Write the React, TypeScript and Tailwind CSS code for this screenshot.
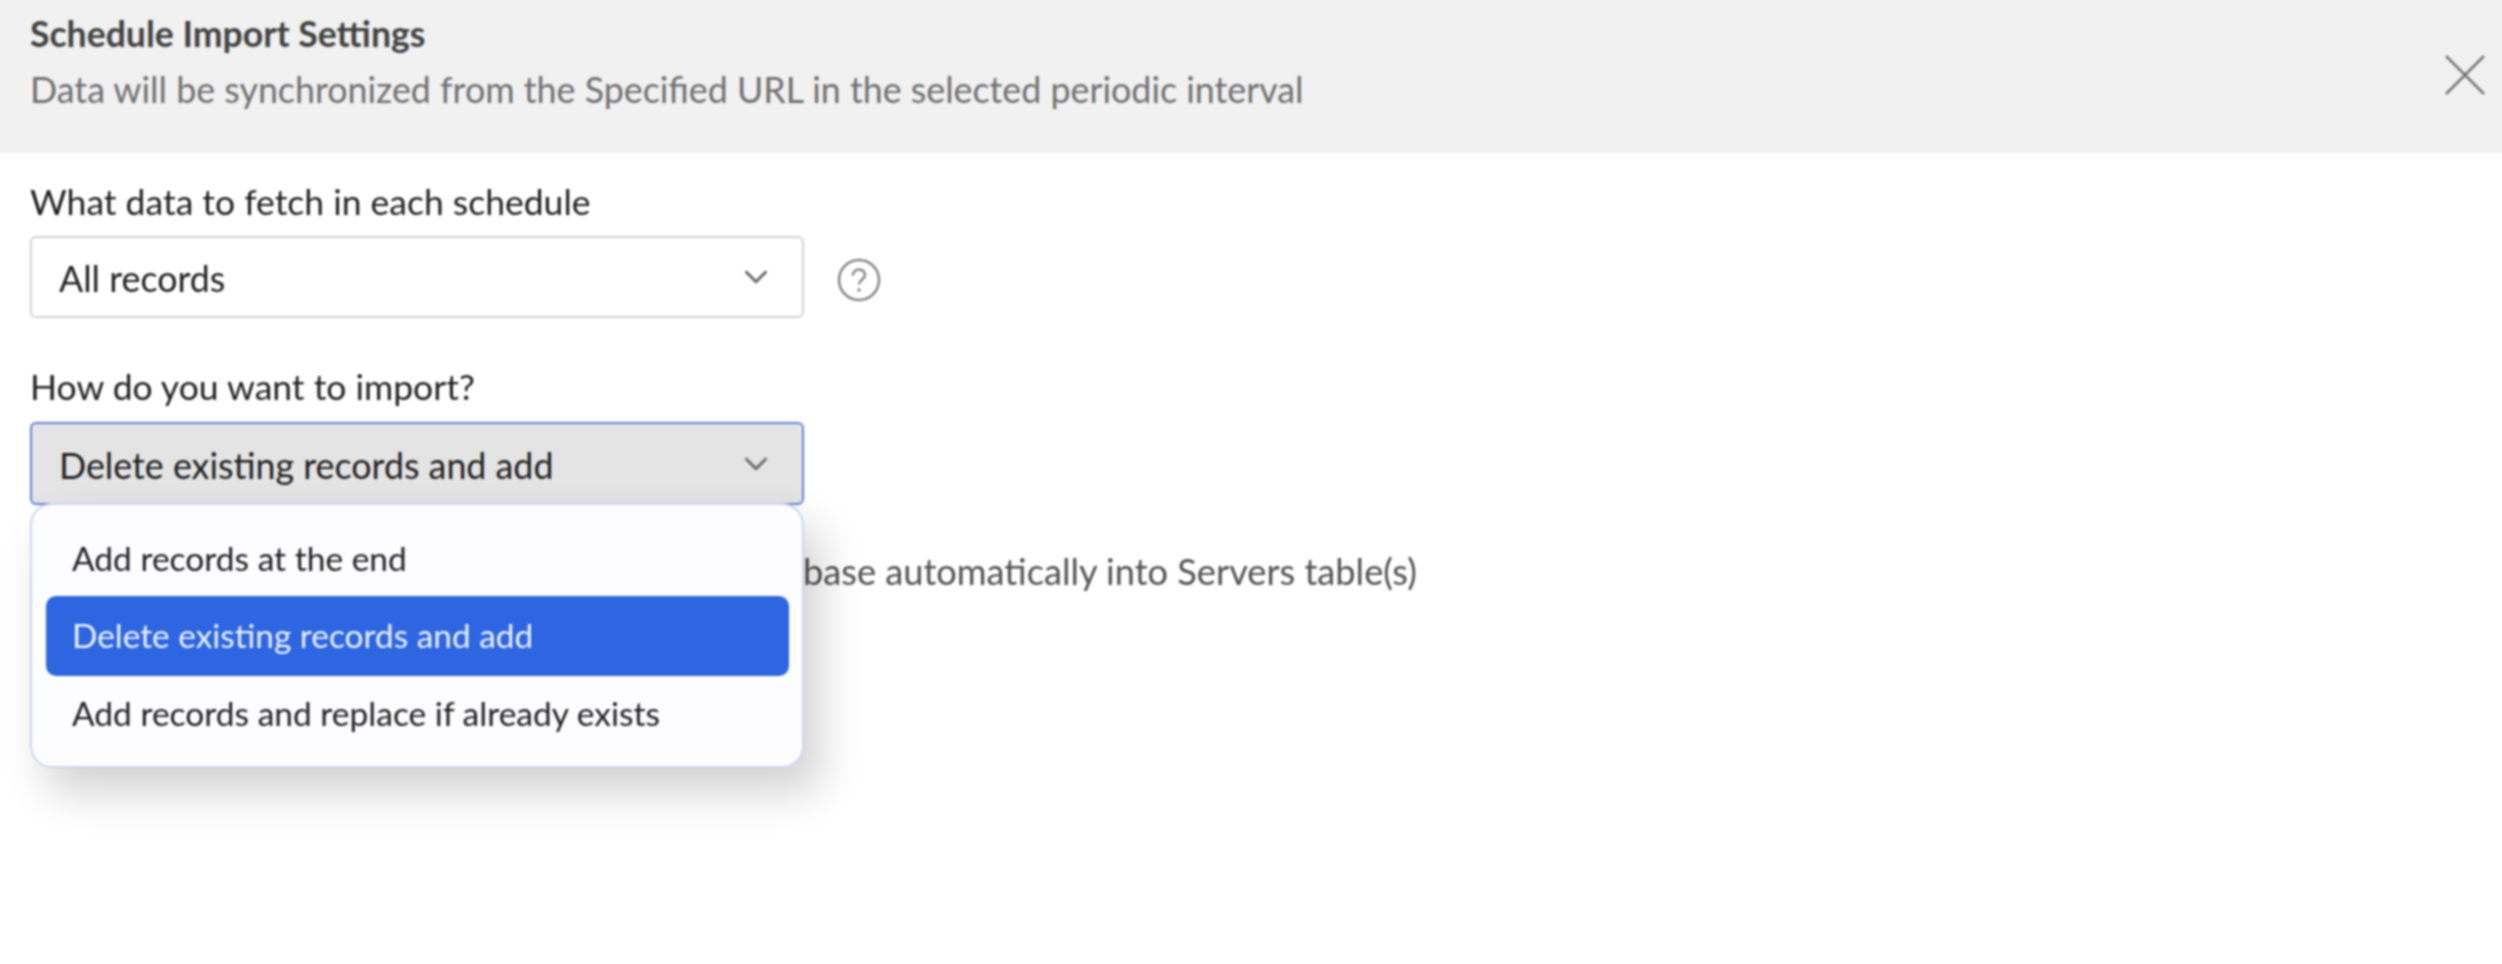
import { ChevronDown } from 'lucide-react';

const options = ['Add records at the end', 'Delete existing records and add', 'Add records and replace if already exists'];

function Select({ value, open }: { value: string; open?: boolean }) {
  return (
    <div
      className={
        open
          ? 'flex h-[83px] w-[774px] items-center justify-between rounded-[6px] border-2 border-[#5f82de] bg-[#e4e4e4] pl-[27px] pr-[27px]'
          : 'flex h-[82px] w-[774px] items-center justify-between rounded-[6px] border-2 border-[#d2d2d2] bg-white pl-[27px] pr-[27px]'
      }
    >
      <span className="pt-[4px] text-[35.8px] leading-none text-[#1f1f1f]">{value}</span>
      <ChevronDown className="size-[38px] text-[#6e6e6e]" strokeWidth={2} />
    </div>
  );
}

export default function App() {
  return (
    <div className="h-[964px] w-[2502px] overflow-hidden bg-white">
      <div className="font-['Lato',sans-serif] blur-[0.8px]">
        <header className="-mx-[6px] -mt-[6px] flex h-[159px] items-start justify-between bg-[#f1f1f1] pl-[36px] pr-[23px] pt-[17px]">
          <div>
            <h1 className="text-[35.6px] font-bold leading-[46px] text-[#424242]">Schedule Import Settings</h1>
            <p className="mt-[10px] text-[35.8px] leading-[46px] text-[#707070]">
              Data will be synchronized from the Specified URL in the selected periodic interval
            </p>
          </div>
          <svg viewBox="0 0 40 40" className="mt-[44px] size-[40px] text-[#777777]" fill="none" stroke="currentColor" strokeWidth="2.5">
            <path d="M1 1L39 39M39 1L1 39" />
          </svg>
        </header>

        <div className="px-[30px] pt-[27px]">
          <label className="block text-[35.5px] leading-[44px] text-[#1f1f1f]">What data to fetch in each schedule</label>
          <div className="mt-[12px] flex items-center gap-[33px]">
            <Select value="All records" />
            <svg viewBox="0 0 44 44" className="mt-[5px] size-[44px] text-[#858585]" fill="none" stroke="currentColor">
              <circle cx="22" cy="22" r="20" strokeWidth="2.5" />
              <path d="M16 17.5c0-3.5 2.7-6 6-6s6 2.300 6 5.300c0 4.700-6 4.700-6 9.700" strokeWidth="2.5" />
              <circle cx="22" cy="32" r="1.800" fill="currentColor" stroke="none" />
            </svg>
          </div>

          <label className="mt-[47px] block text-[35.5px] leading-[44px] text-[#1f1f1f]">How do you want to import?</label>
          <div className="relative mt-[13px] w-[774px]">
            <Select value="Delete existing records and add" open />
            <div className="absolute left-0 top-[81px] z-10 flex h-[265px] w-[774px] flex-col justify-center rounded-[22px] border-2 border-[#ccd6f2] bg-[#fdfdff] pl-[14px] pr-[13px] shadow-[16px_24px_44px_rgba(0,0,0,0.18)]">
              {options.map((o, i) => (
                <div
                  key={o}
                  className={
                    i === 1
                      ? 'flex h-[80px] items-center rounded-[10px] bg-[#2d66e0] pl-[26px] text-[33.4px] text-[#eef3ff]'
                      : 'flex h-[75px] items-center pl-[26px] text-[33.5px] text-[#1f1f1f]'
                  }
                >
                  {o}
                </div>
              ))}
            </div>
          </div>

          <p className="ml-[773px] mt-[43px] text-[36.2px] leading-[46px] text-[#525252]">base automatically into Servers table(s)</p>
        </div>
      </div>
    </div>
  );
}
